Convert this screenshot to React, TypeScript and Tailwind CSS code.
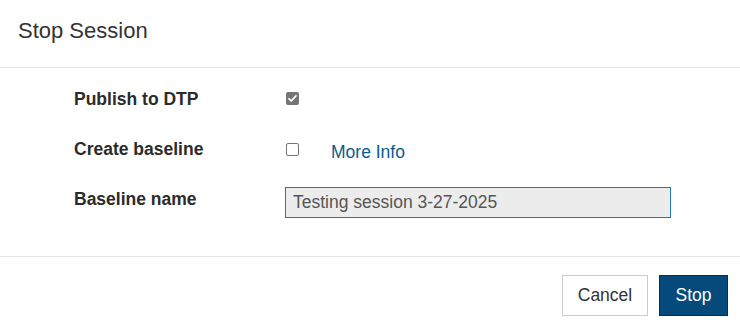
import { useState } from 'react'

function Box({ checked }: { checked: boolean }) {
  if (checked) {
    return (
      <span className="flex h-[13px] w-[13px] items-center justify-center rounded-[2px] bg-[#767676]">
        <svg width="11" height="11" viewBox="0 0 12 12" fill="none">
          <path d="M2.2 6.3l2.4 2.4 5.2-5.6" stroke="#fff" strokeWidth="1.9" strokeLinecap="round" strokeLinejoin="round" />
        </svg>
      </span>
    )
  }
  return <span className="block h-[13px] w-[13px] rounded-[2px] border border-[#767676] bg-white" />
}

export default function App() {
  const [name] = useState('Testing session 3-27-2025')

  return (
    <div className="h-[333px] w-[740px] bg-white font-['Liberation_Sans',Arial,sans-serif] text-[#333]">
      {/* header */}
      <div className="h-[68px] border-b border-[#e5e5e5] pl-[18px] pt-[18px]">
        <h1 className="text-[22px] leading-[26px] text-[#333]">Stop Session</h1>
      </div>

      {/* body */}
      <div className="h-[188px] pl-[74px] pt-[21px] text-[17.5px] leading-[20px]">
        <div className="flex h-[50px] items-start">
          <div className="w-[212px] font-bold text-[#2b2b2b]">Publish to DTP</div>
          <div className="mt-[3px]">
            <Box checked />
          </div>
        </div>
        <div className="flex h-[48px] items-start">
          <div className="w-[212px] font-bold text-[#2b2b2b]">Create baseline</div>
          <div className="mt-[4px]">
            <Box checked={false} />
          </div>
          <a className="ml-[32px] mt-[3px] text-[#0b5b8e]" href="#">More Info</a>
        </div>
        <div className="flex items-start">
          <div className="mt-[2px] w-[211px] font-bold text-[#2b2b2b]">Baseline name</div>
          <input
            readOnly
            value={name}
            className="h-[31px] w-[386px] border border-[#1f7ab3] bg-[#ececec] px-[7px] text-[17.5px] text-[#555] outline-none"
          />
        </div>
      </div>

      {/* footer */}
      <div className="flex justify-end gap-[11px] border-t border-[#e5e5e5] pr-[12px] pt-[18px] text-[17.5px]">
        <button className="h-[41px] w-[86px] border border-[#cccccc] bg-white text-[#333]">Cancel</button>
        <button className="h-[41px] w-[69px] border border-[#0b2e4a] bg-[#054a7a] text-white">Stop</button>
      </div>
    </div>
  )
}
